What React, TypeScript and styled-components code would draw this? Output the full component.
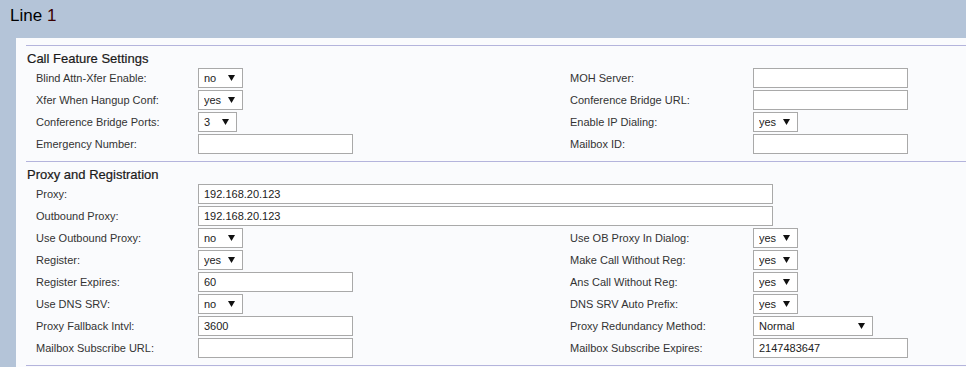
import React from 'react'
import styled, { createGlobalStyle } from 'styled-components'

const GlobalStyle = createGlobalStyle`
    html, body {
        margin: 0;
        padding: 0;
        height: 100%;
        background: #b4c4d8;
        font-family: "Liberation Sans", Arial, sans-serif;
        overflow: hidden;
    }
`

type Field =
    | { kind: 'text'; value?: string; width?: number }
    | { kind: 'select'; value: string; width: number }

type Row = {
    left: [string, Field]
    right?: [string, Field]
    wide?: boolean
}

const yesNo = (value: string): Field => ({ kind: 'select', value, width: 45 })
const text = (value = '', width = 155): Field => ({ kind: 'text', value, width })

const callFeatureRows: Row[] = [
    { left: ['Blind Attn-Xfer Enable:', yesNo('no')], right: ['MOH Server:', text()] },
    { left: ['Xfer When Hangup Conf:', yesNo('yes')], right: ['Conference Bridge URL:', text()] },
    {
        left: ['Conference Bridge Ports:', { kind: 'select', value: '3', width: 39 }],
        right: ['Enable IP Dialing:', yesNo('yes')],
    },
    { left: ['Emergency Number:', text()], right: ['Mailbox ID:', text()] },
]

const proxyRows: Row[] = [
    { left: ['Proxy:', text('192.168.20.123', 575)], wide: true },
    { left: ['Outbound Proxy:', text('192.168.20.123', 575)], wide: true },
    { left: ['Use Outbound Proxy:', yesNo('no')], right: ['Use OB Proxy In Dialog:', yesNo('yes')] },
    { left: ['Register:', yesNo('yes')], right: ['Make Call Without Reg:', yesNo('yes')] },
    { left: ['Register Expires:', text('60')], right: ['Ans Call Without Reg:', yesNo('yes')] },
    { left: ['Use DNS SRV:', yesNo('no')], right: ['DNS SRV Auto Prefix:', yesNo('yes')] },
    {
        left: ['Proxy Fallback Intvl:', text('3600')],
        right: ['Proxy Redundancy Method:', { kind: 'select', value: 'Normal', width: 120 }],
    },
    {
        left: ['Mailbox Subscribe URL:', text()],
        right: ['Mailbox Subscribe Expires:', text('2147483647')],
    },
]

function Control({ field }: { field: Field }) {
    if (field.kind === 'select') {
        return (
            <SelectWrap $width={field.width}>
                <Select defaultValue={field.value}>
                    <option value={field.value}>{field.value}</option>
                </Select>
                <Arrow width="7" height="6" viewBox="0 0 7 6">
                    <polygon points="0,0 7,0 3.5,6" fill="#111" />
                </Arrow>
            </SelectWrap>
        )
    }
    return <TextInput $width={field.width ?? 155} defaultValue={field.value} />
}

function SettingsSection({ title, rows }: { title: string; rows: Row[] }) {
    return (
        <Section>
            <SectionTitle>{title}</SectionTitle>
            <Grid>
                {rows.map((row) => (
                    <React.Fragment key={row.left[0]}>
                        <Label>{row.left[0]}</Label>
                        <Cell $wide={row.wide}>
                            <Control field={row.left[1]} />
                        </Cell>
                        {row.right && (
                            <>
                                <Label>{row.right[0]}</Label>
                                <Cell>
                                    <Control field={row.right[1]} />
                                </Cell>
                            </>
                        )}
                    </React.Fragment>
                ))}
            </Grid>
        </Section>
    )
}

export default function App() {
    return (
        <>
            <GlobalStyle />
            <Header>
                <Title>
                    Line <LineNo>1</LineNo>
                </Title>
            </Header>
            <Panel>
                <SettingsSection title="Call Feature Settings" rows={callFeatureRows} />
                <SettingsSection title="Proxy and Registration" rows={proxyRows} />
                <Rule />
            </Panel>
        </>
    )
}

const Header = styled.header`
    height: 38px;
    padding-left: 10px;
    display: flex;
    align-items: flex-start;
`

const Title = styled.h1`
    margin: 6px 0 0;
    font-size: 17px;
    line-height: 20px;
    font-weight: normal;
    color: #000;
`

const LineNo = styled.span`
    color: #3a0000;
`

const Panel = styled.main`
    box-sizing: border-box;
    height: calc(100vh - 38px);
    margin-left: 16px;
    padding: 7px 0 0 10px;
    background: #fafbfd;
    overflow: hidden;
`

const Section = styled.section`
    border-top: 1px solid #b4b4dc;
    padding: 5px 0 7px;
`

const Rule = styled.hr`
    margin: 0;
    border: none;
    border-top: 1px solid #b4b4dc;
`

const SectionTitle = styled.h2`
    margin: 0 0 1px 1px;
    font-size: 13px;
    line-height: 16px;
    font-weight: normal;
    color: #1a1a1a;
    -webkit-text-stroke: 0.2px #1a1a1a;
`

const Grid = styled.div`
    display: grid;
    grid-template-columns: 162px 372px 183px 1fr;
    grid-auto-rows: 20px;
    row-gap: 2px;
    padding-left: 10px;
`

const Label = styled.label`
    align-self: center;
    font-size: 11px;
    line-height: 14px;
    color: #333;
    white-space: nowrap;
`

const Cell = styled.div<{ $wide?: boolean }>`
    display: flex;
    align-items: stretch;
    grid-column: ${(p) => (p.$wide ? 'span 3' : 'auto')};
`

const TextInput = styled.input<{ $width: number }>`
    box-sizing: border-box;
    width: ${(p) => p.$width}px;
    height: 20px;
    margin: 0;
    padding: 0 5px;
    border: 1px solid #a9a9a9;
    background: #fff;
    font-family: "Liberation Sans", Arial, sans-serif;
    font-size: 11px;
    color: #222;
    outline: none;
`

const SelectWrap = styled.div<{ $width: number }>`
    position: relative;
    width: ${(p) => p.$width}px;
    height: 20px;
`

const Select = styled.select`
    appearance: none;
    box-sizing: border-box;
    width: 100%;
    height: 100%;
    margin: 0;
    padding: 0 0 0 5px;
    border: 1px solid #a9a9a9;
    border-radius: 0;
    background: #fff;
    font-family: "Liberation Sans", Arial, sans-serif;
    font-size: 11px;
    color: #222;
    outline: none;
`

const Arrow = styled.svg`
    position: absolute;
    right: 8px;
    top: 7px;
    pointer-events: none;
`
